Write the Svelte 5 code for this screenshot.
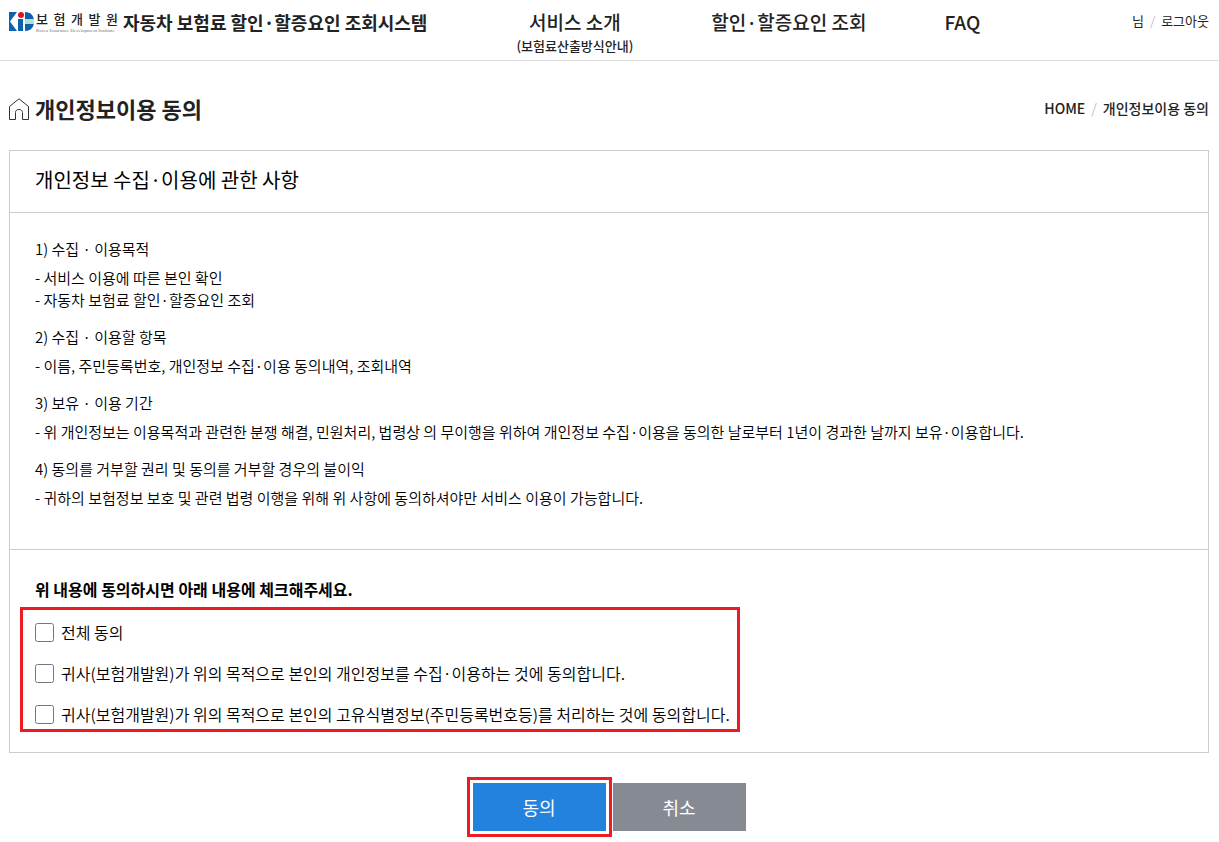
<script lang="ts">
	const terms = [
		{
			title: '1) 수집 · 이용목적',
			items: ['- 서비스 이용에 따른 본인 확인', '- 자동차 보험료 할인·할증요인 조회']
		},
		{
			title: '2) 수집 · 이용할 항목',
			items: ['- 이름, 주민등록번호, 개인정보 수집·이용 동의내역, 조회내역']
		},
		{
			title: '3) 보유 · 이용 기간',
			items: [
				'- 위 개인정보는 이용목적과 관련한 분쟁 해결, 민원처리, 법령상 의 무이행을 위하여 개인정보 수집·이용을 동의한 날로부터 1년이 경과한 날까지 보유·이용합니다.'
			]
		},
		{
			title: '4) 동의를 거부할 권리 및 동의를 거부할 경우의 불이익',
			items: ['- 귀하의 보험정보 보호 및 관련 법령 이행을 위해 위 사항에 동의하셔야만 서비스 이용이 가능합니다.']
		}
	];

	const consents = [
		'귀사(보험개발원)가 위의 목적으로 본인의 개인정보를 수집·이용하는 것에 동의합니다.',
		'귀사(보험개발원)가 위의 목적으로 본인의 고유식별정보(주민등록번호등)를 처리하는 것에 동의합니다.'
	];

	let checked = $state([false, false]);
	let all = $derived(checked.every(Boolean));

	function toggleAll() {
		const next = !all;
		checked = checked.map(() => next);
	}
</script>

<header>
	<div class="inner top">
		<a class="brand" href="#home">
			<svg class="mark" viewBox="0 0 25 19" aria-hidden="true">
				<path d="M0 0H8L1 9.5L8 19H0Z" fill="#0b63b0" />
				<circle cx="12" cy="3" r="3" fill="#e5121f" />
				<rect x="9" y="7" width="5" height="12" fill="#0b63b0" />
				<path d="M16 0C22 0 25 4 25 9.5S22 19 16 19Z" fill="#0b63b0" />
				<path d="M16 7H25V12H16Z" fill="#b5dfc8" />
			</svg>
			<span class="company">
				<span class="company-ko"
					><b>보</b><b>험</b><b>개</b><b>발</b><b>원</b></span
				>
				<span class="company-en">Korea Insurance Development Institute</span>
			</span>
			<strong class="system">자동차 보험료 할인·할증요인 조회시스템</strong>
		</a>
		<nav>
			<a href="#service">서비스 소개<small>(보험료산출방식안내)</small></a>
			<a href="#search">할인·할증요인 조회</a>
			<a href="#faq">FAQ</a>
		</nav>
		<div class="user">
			<span>님</span>
			<i>/</i>
			<a href="#logout">로그아웃</a>
		</div>
	</div>
</header>

<main class="inner">
	<div class="page-head">
		<svg class="house" viewBox="0 0 20 22" aria-hidden="true">
			<path
				d="M0.5 8.5L10 0.8L19.5 8.5V21.5H13.5V14.5C13.5 12.5 12 11.5 10 11.5S6.5 12.5 6.5 14.5V21.5H0.5Z"
				fill="none"
				stroke="#333"
			/>
		</svg>
		<h1>개인정보이용 동의</h1>
		<div class="crumbs">
			<a href="#home">HOME</a>
			<i>/</i>
			<span>개인정보이용 동의</span>
		</div>
	</div>

	<section class="panel">
		<h2>개인정보 수집·이용에 관한 사항</h2>

		<div class="terms">
			{#each terms as term}
				<h3>{term.title}</h3>
				{#each term.items as item}
					<p>{item}</p>
				{/each}
			{/each}
		</div>

		<div class="agree">
			<p class="ask">위 내용에 동의하시면 아래 내용에 체크해주세요.</p>
			<div class="checks">
				<label><input type="checkbox" checked={all} onchange={toggleAll} />전체 동의</label>
				{#each consents as text, i}
					<label><input type="checkbox" bind:checked={checked[i]} />{text}</label>
				{/each}
			</div>
		</div>
	</section>

	<div class="buttons">
		<button class="ok" type="button">동의</button>
		<button class="cancel" type="button">취소</button>
	</div>
</main>

<style>
	:global(body) {
		margin: 0;
		background: #fff;
		color: #000;
		font-family: 'Noto Sans CJK KR', 'Noto Sans', sans-serif;
		font-size: 15px;
		line-height: 22px;
	}
	a {
		color: inherit;
		text-decoration: none;
	}
	h1,
	h2,
	h3,
	p {
		margin: 0;
	}
	i {
		color: #aaa;
		font-style: normal;
		font-weight: 300;
	}

	.inner {
		max-width: 1200px;
		margin: 0 auto;
		padding: 0 10px 0 9px;
	}

	/* header */
	header {
		border-bottom: 1px solid #ddd;
		color: #222;
	}
	.top {
		display: flex;
		align-items: flex-start;
		height: 60px;
		white-space: nowrap;
	}
	.brand {
		display: flex;
		align-items: center;
		padding-top: 9px;
	}
	.mark {
		width: 25px;
		height: 19px;
	}
	.company {
		display: flex;
		flex-direction: column;
		width: 82px;
		margin: 0 5px 0 2px;
	}
	.company-ko {
		display: flex;
		justify-content: space-between;
		font-size: 13px;
		line-height: 19px;
	}
	.company-ko b {
		font-weight: 500;
	}
	.company-en {
		font-family: 'Liberation Serif', serif;
		font-size: 5px;
		line-height: 6px;
		color: #777;
	}
	.system {
		font-size: 18px;
		line-height: 24px;
		font-weight: 700;
	}
	nav {
		display: flex;
		gap: 78px;
		margin-left: 89px;
		padding-top: 10px;
		font-size: 19px;
		line-height: 24px;
		font-weight: 500;
		text-align: center;
	}
	small {
		display: block;
		font-size: 13px;
	}
	.user {
		display: flex;
		gap: 6px;
		margin-left: auto;
		padding-top: 10px;
		font-size: 13px;
	}

	/* page title row */
	.page-head {
		display: flex;
		align-items: center;
		padding: 33px 0 27px;
		line-height: 29px;
		color: #222;
	}
	.house {
		width: 20px;
		height: 22px;
		margin-right: 6px;
	}
	h1 {
		font-size: 22px;
		font-weight: 700;
	}
	.crumbs {
		display: flex;
		gap: 6px;
		margin-left: auto;
		font-size: 14px;
		font-weight: 500;
	}

	/* terms box */
	.panel {
		border: 1px solid #ccc;
	}
	h2 {
		padding: 14px 25px 17px;
		border-bottom: 1px solid #ccc;
		font-size: 20px;
		line-height: 30px;
		font-weight: 400;
	}
	.terms {
		padding: 25px 25px 40px;
		border-bottom: 1px solid #ccc;
		font-weight: 350;
	}
	h3 {
		margin-bottom: 7px;
		font-size: 15px;
		font-weight: 350;
	}
	p + h3 {
		margin-top: 15px;
	}

	.agree {
		padding: 27px 10px 20px;
	}
	.ask {
		margin: 0 15px 6px;
		font-size: 16px;
		line-height: 24px;
		font-weight: 700;
	}
	.checks {
		display: flex;
		flex-direction: column;
		gap: 21px;
		box-sizing: border-box;
		width: fit-content;
		padding: 12px 7px 5px 12px;
		border: 3px solid #ed1c24;
	}
	label {
		display: flex;
		align-items: center;
		gap: 7px;
		font-size: 16px;
		line-height: 20px;
		font-weight: 350;
	}
	input {
		flex: none;
		width: 19px;
		height: 19px;
		margin: 0;
	}

	.buttons {
		display: flex;
		justify-content: center;
		gap: 7px;
		padding: 30px 0 11px;
	}
	button {
		width: 133px;
		height: 48px;
		border: 0;
		font: 400 18px 'Noto Sans CJK KR', sans-serif;
		color: #fff;
		cursor: pointer;
	}
	.ok {
		background: #2382dd;
		outline: 3px solid #ed1c24;
		outline-offset: 3px;
	}
	.cancel {
		background: #868b93;
	}
</style>
